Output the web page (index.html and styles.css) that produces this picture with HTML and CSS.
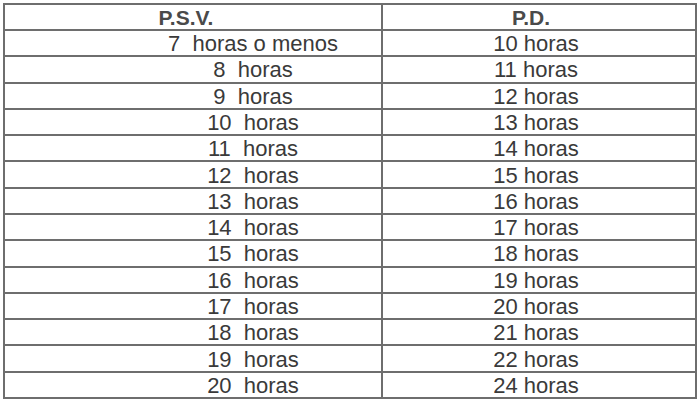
FILE: index.html
```html
<!DOCTYPE html>
<html lang="es">
<head>
<meta charset="utf-8">
<link rel="stylesheet" href="styles.css">
</head>
<body>
<table class="horas">
  <colgroup><col class="c1"><col class="c2"></colgroup>
  <thead>
    <tr><th class="h1">P.S.V.</th><th class="h2">P.D.</th></tr>
  </thead>
  <tbody>
    <tr><td class="psv">7&nbsp; horas o menos</td><td class="pd">10 horas</td></tr>
    <tr><td class="psv">8&nbsp; horas</td><td class="pd">11 horas</td></tr>
    <tr><td class="psv">9&nbsp; horas</td><td class="pd">12 horas</td></tr>
    <tr><td class="psv">10&nbsp; horas</td><td class="pd">13 horas</td></tr>
    <tr><td class="psv">11&nbsp; horas</td><td class="pd">14 horas</td></tr>
    <tr><td class="psv">12&nbsp; horas</td><td class="pd">15 horas</td></tr>
    <tr><td class="psv">13&nbsp; horas</td><td class="pd">16 horas</td></tr>
    <tr><td class="psv">14&nbsp; horas</td><td class="pd">17 horas</td></tr>
    <tr><td class="psv">15&nbsp; horas</td><td class="pd">18 horas</td></tr>
    <tr><td class="psv">16&nbsp; horas</td><td class="pd">19 horas</td></tr>
    <tr><td class="psv">17&nbsp; horas</td><td class="pd">20 horas</td></tr>
    <tr><td class="psv">18&nbsp; horas</td><td class="pd">21 horas</td></tr>
    <tr><td class="psv">19&nbsp; horas</td><td class="pd">22 horas</td></tr>
    <tr><td class="psv">20&nbsp; horas</td><td class="pd">24 horas</td></tr>
  </tbody>
</table>
</body>
</html>
```

FILE: styles.css
```css
html, body {
  margin: 0;
  padding: 0;
  background: #ffffff;
}
body {
  padding: 3px 0 0 3px;
  font-family: "Liberation Sans", Arial, sans-serif;
  color: #3a3a3a;
}
.horas {
  border-collapse: collapse;
  width: 692px;
  height: 396px;
  table-layout: fixed;
  font-size: 22px;
}
.c1 { width: 378px; }
.c2 { width: 314px; }
.horas th,
.horas td {
  border: 2px solid #6e6e6e;
  padding: 2px 0 0 0;
  line-height: 22px;
  text-align: center;
  vertical-align: middle;
}
.horas th {
  font-weight: bold;
  color: #4a4a4a;
  font-size: 21px;
}
.horas .h1 { padding-right: 14px; }
.horas .h2 { padding-right: 16px; }
.horas .psv { padding-left: 120px; }
.horas .pd { padding-right: 6px; }
```
